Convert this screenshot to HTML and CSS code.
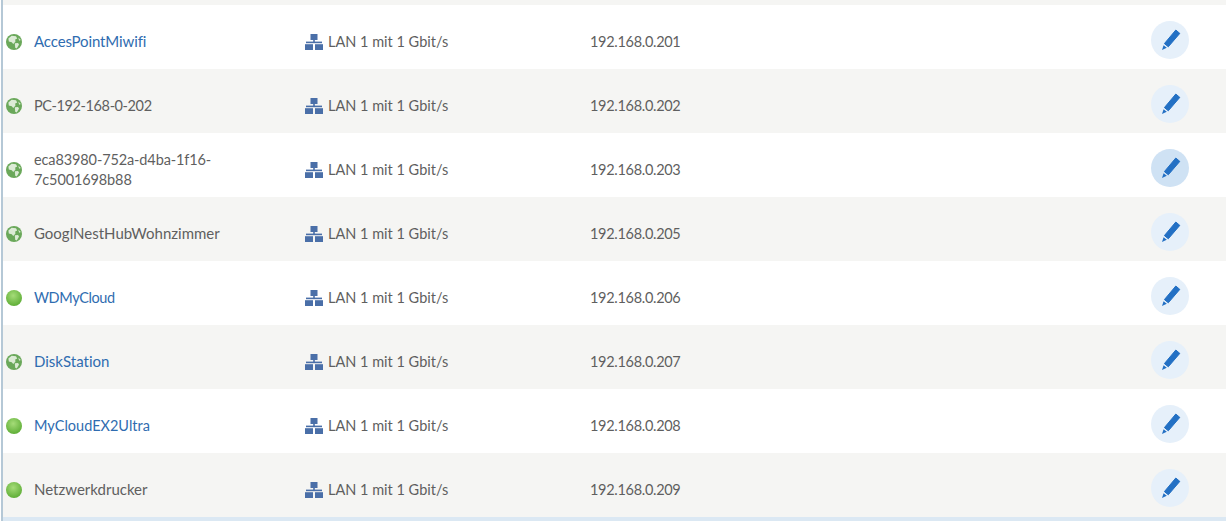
FILE: index.html
```html
<!DOCTYPE html>
<html lang="de">
<head>
  <meta charset="UTF-8">
  <title>Netzwerkverbindungen</title>
  <link rel="stylesheet" href="styles.css">
</head>
<body>

  <svg class="defs" width="0" height="0">
    <defs>
      <radialGradient id="led" cx="45%" cy="35%" r="65%">
        <stop offset="0" stop-color="#a5dc78"/>
        <stop offset="1" stop-color="#5fae37"/>
      </radialGradient>
      <symbol id="globe" viewBox="0 0 16 16">
        <circle cx="8" cy="8" r="8" fill="#6aa85a"/>
        <path d="M2.400 4.500 5.600 1.800 10 2.200 11.200 4.400 9.200 5.600 9.400 7.800 7.200 10 5.800 8.200 2.800 7.400Z" fill="#dcebd6"/>
        <path d="M8.800 9.200 12 9 13 10.400 10.800 14.400 9.200 13.800Z" fill="#dcebd6"/>
        <path d="M12.200 3.400 14.800 6 13.200 6.800Z" fill="#dcebd6"/>
      </symbol>
      <symbol id="led-on" viewBox="0 0 16 16">
        <circle cx="8" cy="8" r="8" fill="url(#led)"/>
      </symbol>
      <symbol id="lan" viewBox="0 0 18 16">
        <rect x="5.500" y="0" width="7" height="6" fill="#4a6fa8"/>
        <rect x="8.200" y="6" width="1.600" height="2" fill="#4a6fa8"/>
        <rect x="1" y="7.600" width="16" height="1.600" fill="#4a6fa8"/>
        <rect x="0" y="10.200" width="8" height="5.800" fill="#4a6fa8"/>
        <rect x="10" y="10.200" width="8" height="5.800" fill="#4a6fa8"/>
      </symbol>
      <symbol id="pencil" viewBox="0 0 22 22">
        <path d="M16.800 1 20.800 4.400 9.300 17.800 5.400 14.600Z" fill="#2370c4" stroke="#2370c4" stroke-linejoin="round"/>
        <path d="M4.600 16.200 7.800 18.800 3 21Z" fill="#2370c4"/>
      </symbol>
    </defs>
  </svg>

  <div class="table">
    <div class="row">
      <div class="name"><svg class="status"><use href="#globe"/></svg><a href="#" class="tight">AccesPointMiwifi</a></div>
      <div class="conn"><svg class="lan"><use href="#lan"/></svg>LAN 1 mit 1 Gbit/s</div>
      <div class="ip">192.168.0.201</div>
      <button class="edit"><svg><use href="#pencil"/></svg></button>
    </div>
    <div class="row">
      <div class="name"><svg class="status"><use href="#globe"/></svg><span class="digits">PC-192-168-0-202</span></div>
      <div class="conn"><svg class="lan"><use href="#lan"/></svg>LAN 1 mit 1 Gbit/s</div>
      <div class="ip">192.168.0.202</div>
      <button class="edit"><svg><use href="#pencil"/></svg></button>
    </div>
    <div class="row">
      <div class="name"><svg class="status"><use href="#globe"/></svg><span class="hash">eca83980-752a-d4ba-1f16-<br>7c5001698b88</span></div>
      <div class="conn"><svg class="lan"><use href="#lan"/></svg>LAN 1 mit 1 Gbit/s</div>
      <div class="ip">192.168.0.203</div>
      <button class="edit hover"><svg><use href="#pencil"/></svg></button>
    </div>
    <div class="row">
      <div class="name"><svg class="status"><use href="#globe"/></svg><span>GooglNestHubWohnzimmer</span></div>
      <div class="conn"><svg class="lan"><use href="#lan"/></svg>LAN 1 mit 1 Gbit/s</div>
      <div class="ip">192.168.0.205</div>
      <button class="edit"><svg><use href="#pencil"/></svg></button>
    </div>
    <div class="row">
      <div class="name"><svg class="status"><use href="#led-on"/></svg><a href="#" class="caps">WDMyCloud</a></div>
      <div class="conn"><svg class="lan"><use href="#lan"/></svg>LAN 1 mit 1 Gbit/s</div>
      <div class="ip">192.168.0.206</div>
      <button class="edit"><svg><use href="#pencil"/></svg></button>
    </div>
    <div class="row">
      <div class="name"><svg class="status"><use href="#globe"/></svg><a href="#">DiskStation</a></div>
      <div class="conn"><svg class="lan"><use href="#lan"/></svg>LAN 1 mit 1 Gbit/s</div>
      <div class="ip">192.168.0.207</div>
      <button class="edit"><svg><use href="#pencil"/></svg></button>
    </div>
    <div class="row">
      <div class="name"><svg class="status"><use href="#led-on"/></svg><a href="#" class="small">MyCloudEX2Ultra</a></div>
      <div class="conn"><svg class="lan"><use href="#lan"/></svg>LAN 1 mit 1 Gbit/s</div>
      <div class="ip">192.168.0.208</div>
      <button class="edit"><svg><use href="#pencil"/></svg></button>
    </div>
    <div class="row">
      <div class="name"><svg class="status"><use href="#led-on"/></svg><span>Netzwerkdrucker</span></div>
      <div class="conn"><svg class="lan"><use href="#lan"/></svg>LAN 1 mit 1 Gbit/s</div>
      <div class="ip">192.168.0.209</div>
      <button class="edit"><svg><use href="#pencil"/></svg></button>
    </div>
  </div>

  <div class="footer-line"></div>

</body>
</html>
```

FILE: styles.css
```css
html,
body {
  height: 100%;
}

body {
  margin: 0;
  overflow: hidden;
  background-color: #fff;
  border-left: 2px solid #b5c8d6;
  margin-left: 1px;
  padding-top: 5px;
  box-sizing: border-box;
  font-family: Lato, sans-serif;
  font-size: 14.5px;
  line-height: 20px;
  color: #5f5f5f;
  font-variant-ligatures: none;
  position: relative;
}

.defs {
  position: absolute;
}

body::before {
  content: '';
  position: absolute;
  top: 0;
  left: 0;
  right: 0;
  height: 5px;
  background-color: #f5f5f3;
}

.row {
  display: grid;
  grid-template-columns: 298px 286px 1fr 38px;
  align-items: center;
  height: 64px;
  padding: 10px 37px 0 3px;
  box-sizing: border-box;
}

.row:nth-child(even) {
  background-color: #f5f5f3;
}

.name {
  display: flex;
  align-items: center;
  font-size: 15px;
}

.name a,
.name span {
  padding-bottom: 2px;
}

.name a {
  color: #2f6cb0;
  text-decoration: none;
}

.name span {
  width: 190px;
}

.name .tight {
  letter-spacing: -0.12px;
}

.name .caps {
  font-size: 14.5px;
  letter-spacing: -0.4px;
  padding-bottom: 0;
}

.name .small {
  font-size: 14.5px;
  padding-bottom: 0;
}

.name .digits {
  font-size: 14.5px;
  letter-spacing: -0.4px;
  padding-bottom: 0;
}

.name .hash {
  font-size: 14.5px;
  letter-spacing: -0.12px;
  padding-bottom: 0;
}

.status {
  width: 16px;
  height: 16px;
  margin-right: 12px;
  flex: none;
}

.conn {
  display: flex;
  align-items: center;
}

.ip {
  letter-spacing: -0.3px;
}

.lan {
  width: 18px;
  height: 16px;
  margin: 0 5px 0 1px;
  flex: none;
}

.edit {
  width: 38px;
  height: 38px;
  padding: 0;
  border: 0;
  border-radius: 50%;
  background-color: #e6f0fa;
  display: flex;
  align-items: center;
  justify-content: center;
  margin-top: -5px;
}

.edit svg {
  width: 22px;
  height: 22px;
}

.edit.hover {
  background-color: #cfe2f4;
}

.footer-line {
  position: absolute;
  left: 0;
  right: 0;
  bottom: 0;
  height: 4px;
  background-color: #dbe8f3;
}
```
